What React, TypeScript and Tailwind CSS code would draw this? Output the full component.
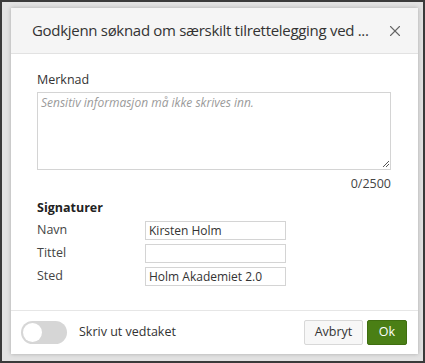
import { X } from "lucide-react";

export default function App() {
    return (
        <div
            className="w-[425px] h-[363px] border-2 border-[#3a3a3a] bg-[#e2e2e2] pl-[9px] pt-[6px] overflow-hidden"
            style={{ fontFamily: '"Open Sans", sans-serif' }}
        >
            {/* Modal */}
            <div className="w-[407px] h-[346px] bg-white flex flex-col shadow-[0_0_4px_rgba(0,0,0,0.25)]">
                {/* Header */}
                <div className="h-[46px] shrink-0 flex items-center justify-between pl-[21px] pr-[14px] bg-[#f5f5f5] border-b border-[#e2e2e2]">
                    <h2 className="text-[15px] text-[#333] whitespace-nowrap tracking-[-0.3px]">
                        Godkjenn søknad om særskilt tilrettelegging ved ...
                    </h2>
                    <X className="w-[18px] h-[18px] shrink-0 text-[#666]" strokeWidth={1.5} />
                </div>

                {/* Body */}
                <div className="flex-1 flex flex-col px-[26px] pt-[17px]">
                    <label className="text-[12.5px] text-[#333] leading-[18px]">Merknad</label>
                    <div className="relative mt-[3px]">
                        <textarea
                            placeholder="Sensitiv informasjon må ikke skrives inn."
                            className="block w-[354px] h-[78px] border border-[#d4d4d4] px-[3px] py-[1px] text-[12px] italic resize-none placeholder:text-[#9a9a9a] outline-none"
                        />
                        <svg className="absolute right-[2px] bottom-[2px]" width="8" height="8" viewBox="0 0 8 8">
                            <path d="M1 7 L7 1 M4 7 L7 4" stroke="#555" strokeWidth="1" />
                        </svg>
                    </div>
                    <div className="w-[354px] text-right text-[12.5px] text-[#444] leading-[18px] mt-[5px]">0/2500</div>

                    <div className="text-[12.5px] font-bold text-[#222] leading-[18px] mt-[6px]">Signaturer</div>
                    <div className="flex flex-col gap-[4px] mt-[4px]">
                        {[
                            ["Navn", "Kirsten Holm"],
                            ["Tittel", ""],
                            ["Sted", "Holm Akademiet 2.0"],
                        ].map(([label, value]) => (
                            <div key={label} className="flex items-center">
                                <span className="w-[108px] text-[12.5px] text-[#444]">{label}</span>
                                <input
                                    readOnly
                                    value={value}
                                    className="w-[141px] h-[19px] border border-[#d4d4d4] px-[3px] text-[12px] text-[#333] outline-none"
                                />
                            </div>
                        ))}
                    </div>
                </div>

                {/* Footer */}
                <div className="h-[44px] shrink-0 border-t border-[#e6e6e6] flex items-center justify-between pl-[10px] pr-[11px]">
                    <div className="flex items-center gap-[12px]">
                        <div className="w-[46px] h-[23px] rounded-full bg-[#d6d6d6] p-[2px] flex items-center">
                            <div className="w-[19px] h-[19px] rounded-full bg-white" />
                        </div>
                        <span className="text-[12.5px] text-[#333]">Skriv ut vedtaket</span>
                    </div>
                    <div className="flex items-center gap-[4px]">
                        <button className="w-[59px] h-[25px] text-[12.5px] text-[#333] bg-[#f7f7f7] border border-[#d8d8d8] rounded-[2px]">
                            Avbryt
                        </button>
                        <button className="w-[40px] h-[25px] text-[12.5px] text-white bg-[#4a7f15] border border-[#3f6e10] rounded-[2px]">
                            Ok
                        </button>
                    </div>
                </div>
            </div>
        </div>
    );
}
